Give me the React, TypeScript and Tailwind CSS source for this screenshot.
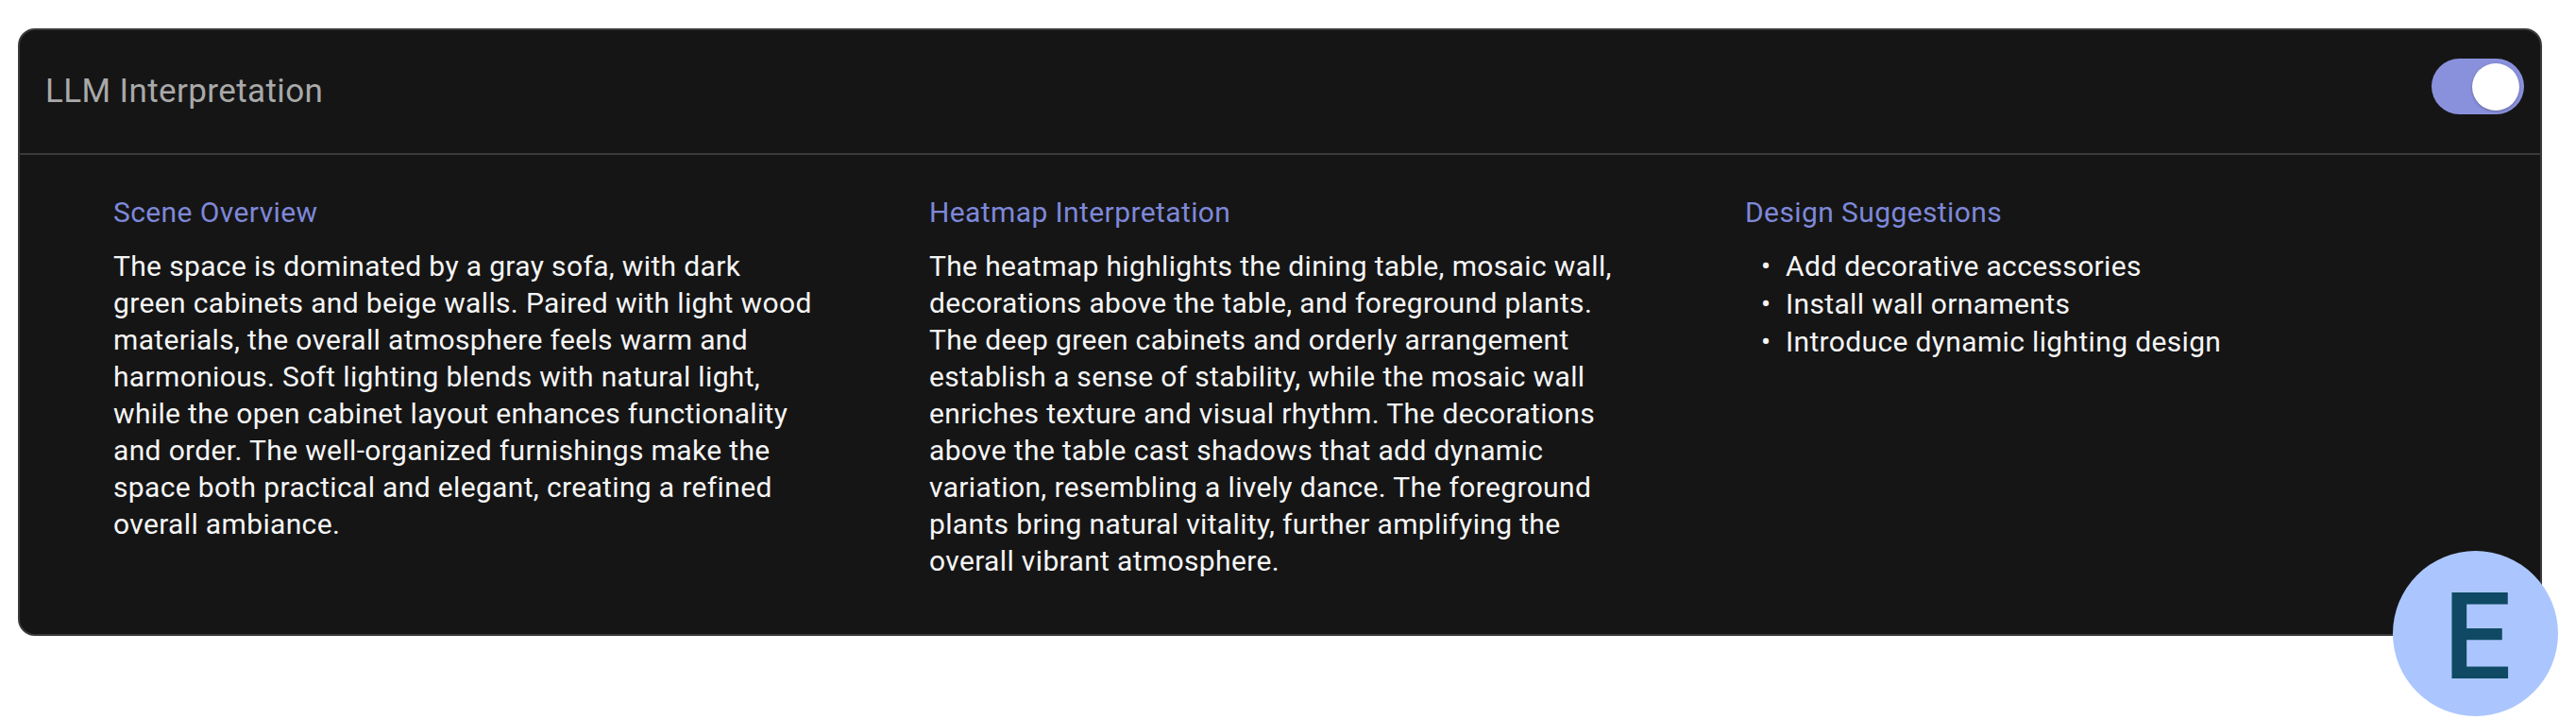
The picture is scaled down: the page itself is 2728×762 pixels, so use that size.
import React from "react";

const sections = [
  {
    title: "Scene Overview",
    body: "The space is dominated by a gray sofa, with dark green cabinets and beige walls. Paired with light wood materials, the overall atmosphere feels warm and harmonious. Soft lighting blends with natural light, while the open cabinet layout enhances functionality and order. The well-organized furnishings make the space both practical and elegant, creating a refined overall ambiance.",
  },
  {
    title: "Heatmap Interpretation",
    body: "The heatmap highlights the dining table, mosaic wall, decorations above the table, and foreground plants. The deep green cabinets and orderly arrangement establish a sense of stability, while the mosaic wall enriches texture and visual rhythm. The decorations above the table cast shadows that add dynamic variation, resembling a lively dance. The foreground plants bring natural vitality, further amplifying the overall vibrant atmosphere.",
  },
];

const suggestions = [
  "Add decorative accessories",
  "Install wall ornaments",
  "Introduce dynamic lighting design",
];

function Toggle({ on }: { on: boolean }) {
  return (
    <div
      className={`flex h-[59px] w-[98px] items-center rounded-full px-[5px] ${
        on ? "justify-end bg-[#8a91dc]" : "justify-start bg-[#555]"
      }`}
    >
      <div className="h-[50px] w-[50px] rounded-full bg-white shadow-[0_1px_3px_rgba(0,0,0,0.3)]" />
    </div>
  );
}

export default function App() {
  return (
    <div className="min-h-screen bg-white pt-[30px] pl-[19px] font-['Roboto',sans-serif]">
      <div className="w-[2673px] overflow-hidden rounded-[18px] border-2 border-[#3a3a3a] bg-[#151515]">
        {/* Header */}
        <div className="flex h-[132px] items-center justify-between border-b-2 border-[#3a3a3a] pl-[27px] pr-[17px]">
          <h1 className="text-[35px] leading-[40px] tracking-[0.4px] text-[#a9a9a9]">
            LLM Interpretation
          </h1>
          <div className="-mt-[11px]">
            <Toggle on />
          </div>
        </div>

        {/* Content */}
        <div className="grid grid-cols-[745px_745px_1fr] gap-x-[119px] pl-[99px] pr-[60px] pt-[41px] pb-[58px]">
          {sections.map((s) => (
            <div key={s.title}>
              <h2 className="mb-[18px] text-[30px] leading-[39px] tracking-[0.4px] text-[#7e88d9]">
                {s.title}
              </h2>
              <p className="text-[30px] leading-[39px] tracking-[0.35px] text-[#f5f5f5]">
                {s.body}
              </p>
            </div>
          ))}
          <div>
            <h2 className="mb-[18px] text-[30px] leading-[39px] tracking-[0.4px] text-[#7e88d9]">
              Design Suggestions
            </h2>
            <ul className="space-y-[1px] pl-[17px]">
              {suggestions.map((item) => (
                <li
                  key={item}
                  className="flex text-[30px] leading-[39px] tracking-[0.35px] text-[#f5f5f5]"
                >
                  <span className="w-[26px] shrink-0">•</span>
                  {item}
                </li>
              ))}
            </ul>
          </div>
        </div>
      </div>

      {/* Floating avatar */}
      <div className="fixed right-[19px] bottom-[4px] flex h-[175px] w-[175px] items-center justify-center rounded-full bg-[#abc6fe]">
        <span className="pl-[4px] pt-[6px] text-[128px] font-medium leading-none text-[#0f4963]">
          E
        </span>
      </div>
    </div>
  );
}
